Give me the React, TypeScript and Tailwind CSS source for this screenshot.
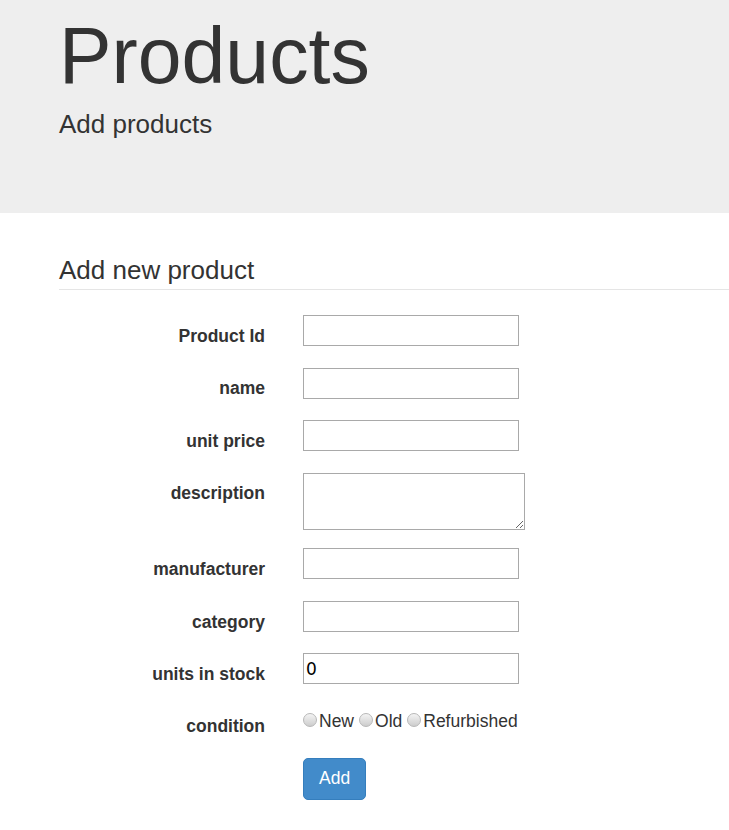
import React from 'react'

const fields = [
  { label: 'Product Id', kind: 'input' },
  { label: 'name', kind: 'input' },
  { label: 'unit price', kind: 'input' },
  { label: 'description', kind: 'textarea' },
  { label: 'manufacturer', kind: 'input' },
  { label: 'category', kind: 'input' },
  { label: 'units in stock', kind: 'input', value: '0' },
]

function Radio({ label }: { label: string }) {
  return (
    <label className="inline-flex items-center">
      <span className="inline-block w-[14px] h-[14px] rounded-full border border-[#b8b8b8] bg-linear-to-b from-[#f4f4f4] to-[#cdcdcd] mr-[2px] -mt-[4px]" />
      <span>{label}</span>
    </label>
  )
}

export default function App() {
  return (
    <div className="min-h-screen bg-white text-[#333] font-['Liberation_Sans',Arial,sans-serif] overflow-hidden">
      {/* Jumbotron */}
      <div className="h-[213px] bg-[#eeeeee] pl-[59px] pt-[12px]">
        <h1 className="text-[78.75px] leading-[88px] font-normal">Products</h1>
        <p className="mt-[6px] text-[26px] leading-[36px]">Add products</p>
      </div>

      <div className="pl-[59px]">
        <h2 className="mt-[39px] text-[26px] leading-[36px] pb-[1px] border-b border-[#e5e5e5]">
          Add new product
        </h2>

        <form className="pt-[25px]" onSubmit={(e) => e.preventDefault()}>
          {fields.map((f) => (
            <div key={f.label} className="flex mb-[18.75px]">
              <label className="w-[206px] text-right font-bold text-[17.5px] leading-[25px] pt-[8.75px]">
                {f.label}
              </label>
              <div className="ml-[38px]">
                {f.kind === 'textarea' ? (
                  <textarea className="block w-[222px] h-[57px] border border-[#a9a9a9] bg-white" />
                ) : (
                  <input
                    type="text"
                    defaultValue={f.value}
                    className="block w-[216px] h-[31px] border border-[#a9a9a9] bg-white px-[2px] text-[17px] text-black font-['DejaVu_Sans',sans-serif]"
                  />
                )}
              </div>
            </div>
          ))}

          <div className="flex mb-[18.75px]">
            <div className="w-[206px] text-right font-bold text-[17.5px] leading-[25px] pt-[8px]">condition</div>
            <div className="ml-[38px] -mt-[1px] text-[17.5px] leading-[25px] flex gap-[5px] h-[33.75px]">
              <Radio label="New" />
              <Radio label="Old" />
              <Radio label="Refurbished" />
            </div>
          </div>

          <div className="flex">
            <div className="w-[206px]" />
            <button
              type="submit"
              className="ml-[38px] h-[42px] px-[15px] rounded-[5px] bg-[#428bca] border border-[#357ebd] text-white text-[17.5px] leading-[25px]"
            >
              Add
            </button>
          </div>
        </form>
      </div>
    </div>
  )
}
